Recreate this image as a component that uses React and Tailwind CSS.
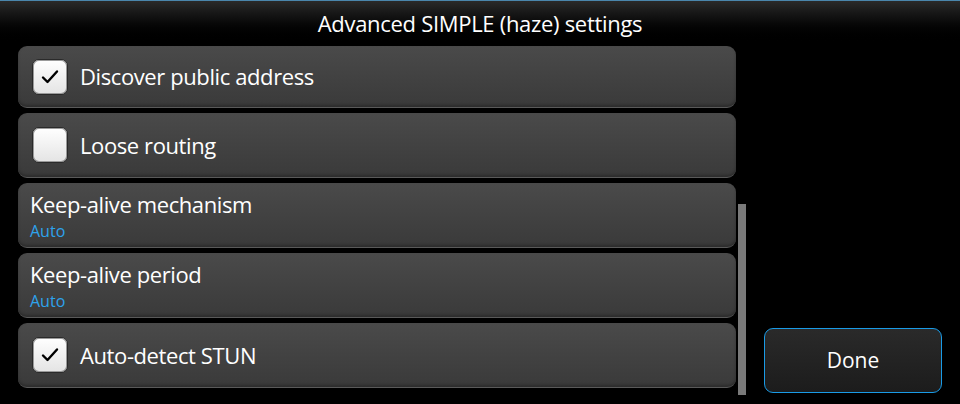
import React from 'react';

const Check = ({ checked }) => (
  <div className="w-[36px] h-[36px] shrink-0 rounded-[7px] border border-[#2a2a2a] bg-gradient-to-b from-[#ffffff] to-[#e4e4e4] shadow-[inset_0_0_0_1px_#9a9a9a] flex items-center justify-center">
    {checked && (
      <svg width="22" height="22" viewBox="0 0 22 22">
        <path d="M4 11.5 L8.5 16 L18 5.5" fill="none" stroke="#000" strokeWidth="2.4" strokeLinecap="round" strokeLinejoin="round" />
      </svg>
    )}
  </div>
);

const rowCls = 'rounded-[9px] bg-gradient-to-b from-[#4a4a4a] to-[#3a3a3a] border-b border-[#5a5a5a] shadow-[inset_0_-2px_3px_rgba(0,0,0,0.25)]';

const CheckRow = ({ label, checked, h = 'h-[65px]' }) => (
  <div className={`${rowCls} ${h} flex items-center gap-[12px] pl-[14px]`}>
    <Check checked={checked} />
    <span className="text-[22px] tracking-[-0.4px] text-white">{label}</span>
  </div>
);

const ValueRow = ({ label, value }) => (
  <div className={`${rowCls} h-[65px] flex flex-col pl-[12px] pt-[7px]`}>
    <span className="text-[22px] leading-[28px] tracking-[-0.4px] text-white">{label}</span>
    <span className="text-[16px] leading-[20px] mt-[3px] text-[#2ea3ec]">{value}</span>
  </div>
);

export default function App() {
  return (
    <div className="w-[960px] h-[404px] bg-black overflow-hidden flex flex-col" style={{ fontFamily: '"Open Sans", "DejaVu Sans", sans-serif' }}>
      <div className="h-[1px] bg-[#4a86ac]" />
      <div className="h-[43px] bg-gradient-to-b from-[#2a2a2a] to-[#000] flex items-center justify-center pt-[2px]">
        <span className="text-[22px] text-white tracking-[-0.3px]">Advanced SIMPLE (haze) settings</span>
      </div>
      <div className="flex flex-1 pl-[18px]">
        <div className="w-[718px] flex flex-col gap-[5px] pt-[2px]">
          <CheckRow label="Discover public address" checked h="h-[62px]" />
          <CheckRow label="Loose routing" />
          <ValueRow label="Keep-alive mechanism" value="Auto" />
          <ValueRow label="Keep-alive period" value="Auto" />
          <CheckRow label="Auto-detect STUN" checked />
        </div>
        <div className="w-[8px] ml-[2px] mt-[160px] h-[191px] bg-[#7a7a7a]" />
        <div className="flex-1 flex items-end pb-[11px] pl-[18px]">
          <button className="w-[178px] h-[65px] rounded-[9px] border border-[#1a9be6] bg-gradient-to-b from-[#2a2a2a] to-[#1c1c1c] text-white text-[21px]">
            Done
          </button>
        </div>
      </div>
    </div>
  );
}
